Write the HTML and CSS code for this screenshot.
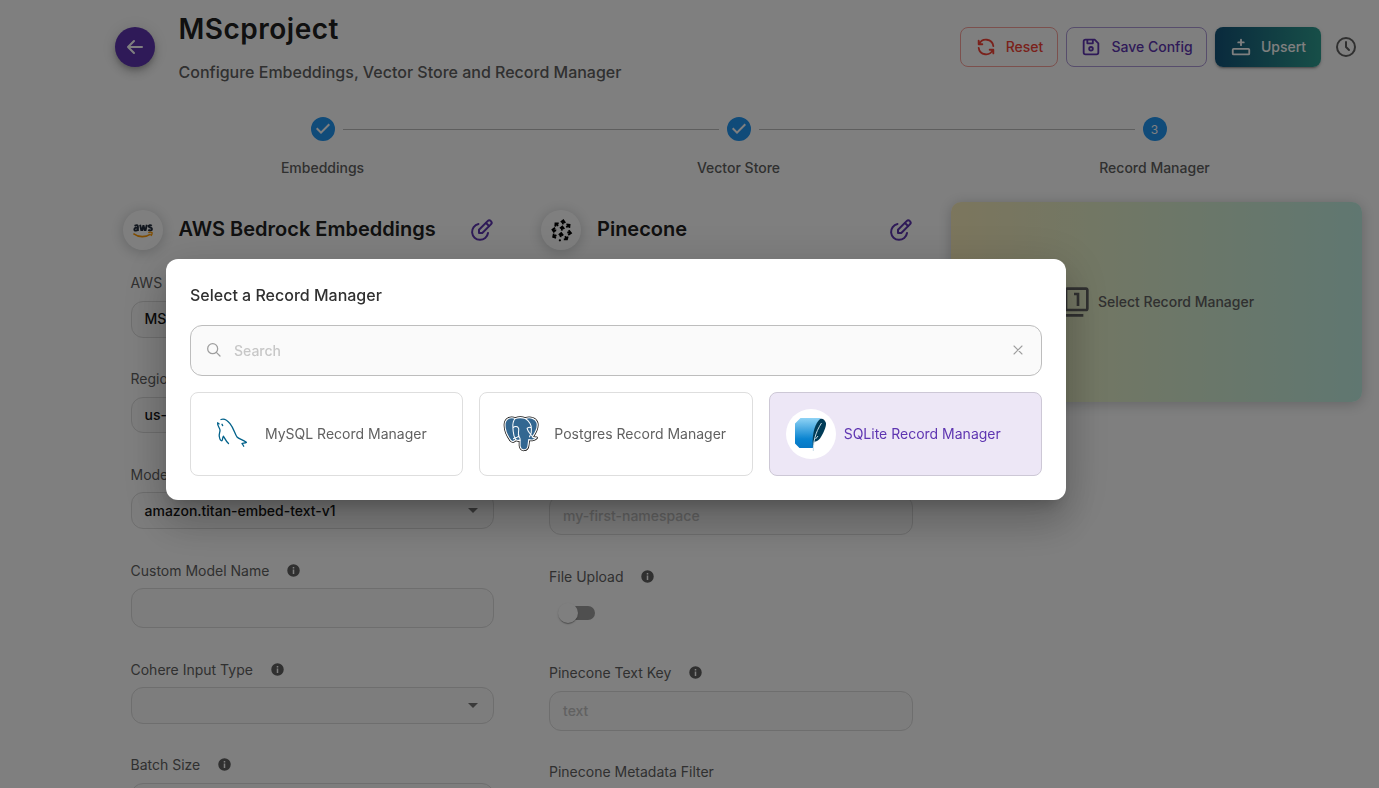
FILE: index.html
```html
<!DOCTYPE html>
<html lang="en">
<head>
<meta charset="utf-8">
<title>MScproject</title>
<link rel="stylesheet" href="styles.css">
</head>
<body>
<svg class="defs" width="0" height="0">
  <symbol id="info" viewBox="0 0 24 24"><path fill="currentColor" d="M12 2a10 10 0 1 0 0 20 10 10 0 0 0 0-20zm1.200 15.500h-2.400V10.500h2.400zm0-8.800h-2.400V6.300h2.400z"/></symbol>
  <symbol id="check" viewBox="0 0 24 24"><path fill="currentColor" d="M12 0a12 12 0 1 0 0 24 12 12 0 0 0 0-24zm-2 17l-5-5 1.400-1.400 3.600 3.600 7.600-7.600L19 8l-9 9z"/></symbol>
  <symbol id="edit" viewBox="0 0 24 24"><g fill="none" stroke="currentColor" stroke-width="2" stroke-linecap="round" stroke-linejoin="round"><path d="M8.500 6A8 8 0 1 0 18 15"/><path d="M9 15v-3.300l8.600-8.600a2.330 2.330 0 0 1 3.300 3.300L12.300 15H9z"/><path d="M16 5l3 3"/></g></symbol>
</svg>
<div class="page">
  <header class="header">
    <button class="back" aria-label="Back"><svg viewBox="0 0 24 24"><path d="M5 12h14M5 12l6 6M5 12l6-6"/></svg></button>
    <div class="heading"><h1>MScproject</h1><p>Configure Embeddings, Vector Store and Record Manager</p></div>
    <div class="actions">
      <button class="btn reset"><svg viewBox="0 0 24 24"><path d="M20 11A8.100 8.100 0 0 0 4.500 9M4 5v4h4M4 13a8.100 8.100 0 0 0 15.500 2M20 19v-4h-4"/></svg><span>Reset</span></button>
      <button class="btn save"><svg viewBox="0 0 24 24"><path d="M6 4h10l4 4v10a2 2 0 0 1-2 2H6a2 2 0 0 1-2-2V6a2 2 0 0 1 2-2M8 4v4h6V4"/><circle cx="12" cy="14" r="2"/></svg><span>Save Config</span></button>
      <button class="btn upsert"><svg viewBox="0 0 24 24"><path d="M4 14h16a1 1 0 0 1 1 1v4a1 1 0 0 1-1 1H4a1 1 0 0 1-1-1v-4a1 1 0 0 1 1-1zM12 4v6M9 7h6"/></svg><span>Upsert</span></button>
      <svg class="clock" viewBox="0 0 24 24"><circle cx="12" cy="12" r="9"/><path d="M12 7v5l3 3"/></svg>
    </div>
  </header>

  <div class="stepper">
    <div class="step"><svg class="dot"><use href="#check"/></svg><span>Embeddings</span></div>
    <div class="step"><svg class="dot"><use href="#check"/></svg><span>Vector Store</span></div>
    <div class="step"><b class="dot num">3</b><span>Record Manager</span></div>
  </div>

  <main class="columns">
    <section class="col">
      <div class="col-head">
        <div class="logo"><svg viewBox="0 0 24 24"><g fill="none" stroke="#252f3e" stroke-width="2"><path d="M3.700 7.200Q7.200 5.300 7.200 8v4.500M7.200 9.300C5 8.800 3.500 9.400 3.500 10.900c0 1.800 2.600 1.600 3.700-.3M9.500 6l1.200 5.500h1L13 6.500l1.200 5h1L16.500 6M21.700 7c-1.300-.9-3.300-.8-3.300.6 0 1.700 3.500.8 3.500 2.800 0 1.900-2.500 1.800-3.900.9"/></g><path d="M2.500 15.200c5.600 4.200 12.700 4.100 18 .5" fill="none" stroke="#ff9900" stroke-width="1.600"/><path d="M18 14.300c1.700-.7 3.500-.6 3.900-.2s-.1 2.400-1.200 3.500" fill="none" stroke="#ff9900" stroke-width="1.400"/></svg></div>
        <h2>AWS Bedrock Embeddings</h2><svg class="edit"><use href="#edit"/></svg>
      </div>
      <div class="field"><label>AWS</label><div class="input select">MSc</div></div>
      <div class="field"><label>Region</label><div class="input select">us-east-1<i></i></div></div>
      <div class="field"><label>Model Name</label><div class="input select">amazon.titan-embed-text-v1<i></i></div></div>
      <div class="field"><label>Custom Model Name<svg><use href="#info"/></svg></label><div class="input"></div></div>
      <div class="field"><label>Cohere Input Type<svg><use href="#info"/></svg></label><div class="input select"><i></i></div></div>
      <div class="field"><label>Batch Size<svg><use href="#info"/></svg></label><div class="input"></div></div>
    </section>
    <section class="col second">
      <div class="col-head">
        <div class="logo"><svg viewBox="0 0 24 24"><g fill="none" stroke="#000" stroke-width="1.900"><path d="M13.300 5.500l.5-4M11.300 3.400l2.600-2 2 2.700M12.200 12.200l.6-4M10.400 9.800l2.500-2 2 2.600M11 19l.6-4M9.200 16.700l2.500-2 2 2.600M17 8.500l3-2.200M17.100 5.700l3.300.3-.3 3.200M8.500 7.200L6 4.800M5.500 8l.2-3.500 3.400.1M18 14l3.700.6M19.500 11.700l2.400 3-2.900 2M6.500 12l-3.700-.7M5.300 9.200l-2.700 2 1.900 2.800M15.700 18.100l1.900 3M18.500 18.300l-.8 3-3.300-.2M6.700 16.800l-3.300 1.700M4 15.200l-.7 3.400 3 1"/></g><circle cx="10.300" cy="22.300" r="1.200"/></svg></div>
        <h2>Pinecone</h2><svg class="edit"><use href="#edit"/></svg>
      </div>
      <div class="field"><label></label><div class="input select"></div></div>
      <div class="field"><label></label><div class="input"></div></div>
      <div class="field"><label></label><div class="input hint">my-first-namespace</div></div>
      <div class="field"><label>File Upload<svg><use href="#info"/></svg></label><div class="switch"><span></span></div></div>
      <div class="field"><label>Pinecone Text Key<svg><use href="#info"/></svg></label><div class="input hint">text</div></div>
      <div class="field"><label>Pinecone Metadata Filter</label></div>
    </section>
    <section class="pick">
      <svg viewBox="0 0 24 24"><path fill="currentColor" d="M3 5H1v16c0 1.100.9 2 2 2h16v-2H3V5zm11 10h2V5h-4v2h2v8zm7-14H7c-1.100 0-2 .9-2 2v14c0 1.100.9 2 2 2h14c1.100 0 2-.9 2-2V3c0-1.100-.9-2-2-2zm0 16H7V3h14v14z"/></svg>
      <span>Select Record Manager</span>
    </section>
  </main>
</div>

<div class="overlay">
  <div class="dialog">
    <h3>Select a Record Manager</h3>
    <div class="search">
      <svg viewBox="0 0 24 24"><circle cx="10" cy="10" r="7.500"/><path d="M21 21l-5.500-5.500"/></svg>
      <span>Search</span>
      <svg class="clear" viewBox="0 0 24 24"><path d="M18 6L6 18M6 6l12 12"/></svg>
    </div>
    <div class="cards">
      <div class="card"><div class="pic"><svg viewBox="0 0 50 50" fill="none" stroke="#00618a" stroke-width="1.300" stroke-linecap="round" stroke-linejoin="round"><path d="M14 10.500c3-1.200 6.500 1 9 4.200 4 5 4.500 9.500 7 13.300 2 2 5.500 2.500 9.400 5.300-1.700.8-3.700.7-4.400 1.300.8.800 1.200 1.500 1.700 2.600M10.700 14c-.7 2 2 5 2.300 7 .2 2-1.200 4-.7 6.500.4 2.300 1.600 4.300 2.500 4.300.8 0 .6-3.500 1.700-4.500 1.200 1.800 2.500 5 5 7.300"/><path d="M10.700 14l1.300.8M15 15.300l.6 1.200" stroke-width="1.400"/></svg></div><span>MySQL Record Manager</span></div>
      <div class="card"><div class="pic"><svg viewBox="-1.500 -1 53 53" stroke-linejoin="round" stroke-linecap="round"><path d="M19 9C13 6.800 8 10 8 16c0 5 3 12 6 16 2 2.500 4 1.200 5.500-.5 1.500 1 3 .8 4.500.5v6c1 6 8 5.500 8.500-.5l.7-6c3 1 7 0 8.300-2-2.500.5-3.500 0-4.500-.8 3-4.200 6-10.700 5-15-1.500-4.700-7-6.400-12.500-4.700C26.500 8 22 8 19 9z" fill="#336791" stroke="#111" stroke-width="2.800"/><path d="M19 9C13 6.800 8 10 8 16c0 5 3 12 6 16 2 2.500 4 1.200 5.500-.5 1.500 1 3 .8 4.500.5v6c1 6 8 5.500 8.500-.5l.7-6c3 1 7 0 8.300-2-2.500.5-3.500 0-4.500-.8 3-4.200 6-10.700 5-15-1.500-4.700-7-6.400-12.500-4.700C26.500 8 22 8 19 9z" fill="#336791" stroke="#fff" stroke-width="1.200"/><path d="M19 9c-3 3-3 7-2.500 11 .5 5 0 7 3 11.500M16.500 19c2-2 5-1.800 6 .5.700 3-1.500 6 .5 8.500M29.500 9c4.500 2.500 7 8 6.500 11 .5 3-.5 6-2 8.500M36 19c-2-1-4-.5-4.500.5.5 3 3.500 6 5.500 8.500M24 32c.2-3-1-4-2.500-3.500-1.500 1-3 1-4.500 2" fill="none" stroke="#fff" stroke-width="1.100"/></svg></div><span>Postgres Record Manager</span></div>
      <div class="card active"><div class="pic"><svg viewBox="0 0 50 50"><defs><linearGradient id="sq" x1="0" y1="0" x2="0" y2="1"><stop offset="0" stop-color="#8fd3f5"/><stop offset=".7" stop-color="#0a84d0"/><stop offset="1" stop-color="#0777c4"/></linearGradient></defs><path d="M14.500 9H35c-5 5-8.500 14-8 30H13.500L9 34.500v-20z" fill="url(#sq)"/><path d="M27 39c-1-9 0-21 6-28C35.500 8 39 10.500 40 14c.4 4-3 11-6 15.500-2 2.500-4 3-5.700 3.200z" fill="#003b57"/><path d="M27.300 42c0-9 1.700-18 8.200-28M29.500 30l2.500-3" fill="none" stroke="#c8dce6" stroke-width="1"/></svg></div><span>SQLite Record Manager</span></div>
    </div>
  </div>
</div>
</body>
</html>
```
FILE: styles.css
```css
* { box-sizing: border-box; }
body { margin: 0; height: 788px; overflow: hidden; background: #fff; font-family: Inter, Roboto, sans-serif; font-size: 14px; color: #616161; }
h1, h2, h3, p { margin: 0; }
button { font: inherit; cursor: pointer; }
.defs { position: absolute; }
.page { height: 788px; overflow: hidden; padding: 9px 16px 0 113px; }

.header { display: flex; align-items: flex-start; height: 108px; }
.back { width: 40px; height: 40px; margin: 18px 24px 0 2px; padding: 8px; border: 0; border-radius: 50%; background: #5e35b1; color: #fff; box-shadow: 0 3px 5px -1px rgba(0,0,0,.2), 0 6px 10px rgba(0,0,0,.14), 0 1px 18px rgba(0,0,0,.12); }
.back svg { display: block; width: 24px; height: 24px; }
.back svg, .btn svg, .clock { fill: none; stroke: currentColor; stroke-width: 2; stroke-linecap: round; stroke-linejoin: round; }
.heading { flex: 1; margin-left: -.5px; }
h1 { font-size: 28px; line-height: 40px; font-weight: 600; letter-spacing: .5px; color: #212121; }
.heading p { margin-top: 13px; font-size: 16px; line-height: 20px; font-weight: 500; }
.actions { display: flex; align-items: center; gap: 8px; padding: 18px 5px 0 0; }
.btn { display: flex; align-items: center; justify-content: center; gap: 9px; height: 40px; padding: 0; border: 1px solid; border-radius: 8px; background: none; font-weight: 500; }
.btn svg { width: 22px; height: 22px; }
.btn span { padding-bottom: 1px; }
.reset { width: 98px; color: #f44336; border-color: #f9a19b; }
.save { width: 141px; color: #5e35b1; border-color: #ae9ad8; }
.upsert { width: 106px; border: 0; color: #fff; background: linear-gradient(to right, #13547a, #2f9e91); box-shadow: 0 3px 1px -2px rgba(0,0,0,.2), 0 2px 2px rgba(0,0,0,.14), 0 1px 5px rgba(0,0,0,.12); }
.clock { width: 24px; height: 24px; margin-left: 5px; }

.stepper { display: flex; width: 1248px; margin-left: 1.500px; }
.step { position: relative; flex: 1; display: flex; flex-direction: column; align-items: center; gap: 17px; height: 85px; font-weight: 500; line-height: 20px; }
.step + .step::before { content: ""; position: absolute; top: 11.500px; left: calc(-50% + 20px); right: calc(50% + 20px); height: 1px; background: #bdbdbd; }
.dot { width: 24px; height: 24px; color: #2196f3; }
.num { border-radius: 50%; background: #2196f3; color: #fff; font-size: 12px; font-weight: 400; line-height: 25px; text-align: center; }

.columns { display: grid; grid-template-columns: 413px 413px 413px; column-gap: 5.500px; align-items: start; }
.col { padding: 0 32px 0 17.500px; }
.col-head { display: flex; align-items: center; height: 40px; margin: 8px 0 0 -8px; }
.logo { display: flex; align-items: center; justify-content: center; flex: none; width: 40px; height: 40px; margin-right: 16px; border-radius: 50%; background: #fff; box-shadow: 0 2px 14px rgba(32,40,45,.25); }
.logo svg { width: 23px; height: 23px; }
h2 { flex: 1; font-size: 20px; font-weight: 600; line-height: 24px; padding-bottom: 2px; color: #212121; }
.edit { width: 24px; height: 24px; color: #5e35b1; }
.col-head + .field { margin-top: 23px; }
.col-head + .field label { padding-bottom: 1px; }
.field + .field { margin-top: 31px; }
.second .field + .field { margin-top: 30.800px; }
.field label { display: flex; align-items: center; height: 20px; }
.field label svg { width: 15px; height: 15px; margin-left: 16.700px; }
.input { display: flex; align-items: center; justify-content: space-between; height: 40px; margin-top: 8px; padding: 0 15px 0 13px; border: 1px solid #dcdcdc; border-radius: 12px; background: #fafafa; color: #121212; font-weight: 500; }
.select { height: 36.700px; padding-bottom: 1px; }
.select i { margin-left: auto; margin-top: 1px; border: 5px solid transparent; border-top-color: #757575; border-bottom: 0; }
.hint { color: #c3c3c3; }
.switch { display: flex; align-items: center; width: 58px; height: 38px; margin-top: 8px; padding: 12px; }
.switch::before { content: ""; width: 34px; height: 14px; border-radius: 7px; background: #9e9e9e; }
.switch span { width: 20px; height: 20px; margin-left: -37px; border-radius: 50%; background: #fff; box-shadow: 0 2px 1px -1px rgba(0,0,0,.2), 0 1px 1px rgba(0,0,0,.14), 0 1px 3px rgba(0,0,0,.12); }

.pick { display: flex; align-items: center; justify-content: center; gap: 8px; width: 411px; height: 200px; margin-left: 1px; padding-right: 1px; border-radius: 10px; background: linear-gradient(to right, #f8ecbb, #dcefcf 50%, #c0efe2); box-shadow: 0 2px 14px rgba(32,40,45,.25); font-weight: 500; }
.pick svg { width: 32px; height: 32px; }
.pick span { padding-bottom: 1px; }

.overlay { position: fixed; inset: 0; background: rgba(0,0,0,.5); padding: 259px 0 0 166px; }
.dialog { width: 900px; height: 241px; padding: 24px; border-radius: 12px; background: #fff; box-shadow: 0 11px 15px -7px rgba(0,0,0,.2), 0 24px 38px 3px rgba(0,0,0,.14), 0 9px 46px 8px rgba(0,0,0,.12); }
h3 { font-size: 16px; font-weight: 500; line-height: 24px; color: #303030; }
.search { display: flex; align-items: center; height: 51px; margin: 18px 0 16px; padding: 0 15px; border: 1px solid #bdbdbd; border-radius: 12px; background: #fafafa; color: #c7c7c7; font-weight: 500; }
.search svg { width: 16px; height: 16px; margin-bottom: 1px; fill: none; stroke: #9e9e9e; stroke-width: 1.900; stroke-linecap: round; }
.search .clear { stroke-width: 1.600; }
.search span { flex: 1; margin-left: 12px; }
.cards { display: grid; grid-template-columns: repeat(3, 1fr); gap: 16px; }
.card { display: flex; align-items: center; gap: 8px; height: 84px; padding: 0 16px; border: 1px solid #dedede; border-radius: 8px; }
.card span { padding-bottom: 1px; }
.pic { width: 50px; height: 50px; border-radius: 50%; background: #fff; }
.pic svg { display: block; }
.active { background: #ede7f6; border-color: #cdc8d6; color: #5e35b1; }
```
